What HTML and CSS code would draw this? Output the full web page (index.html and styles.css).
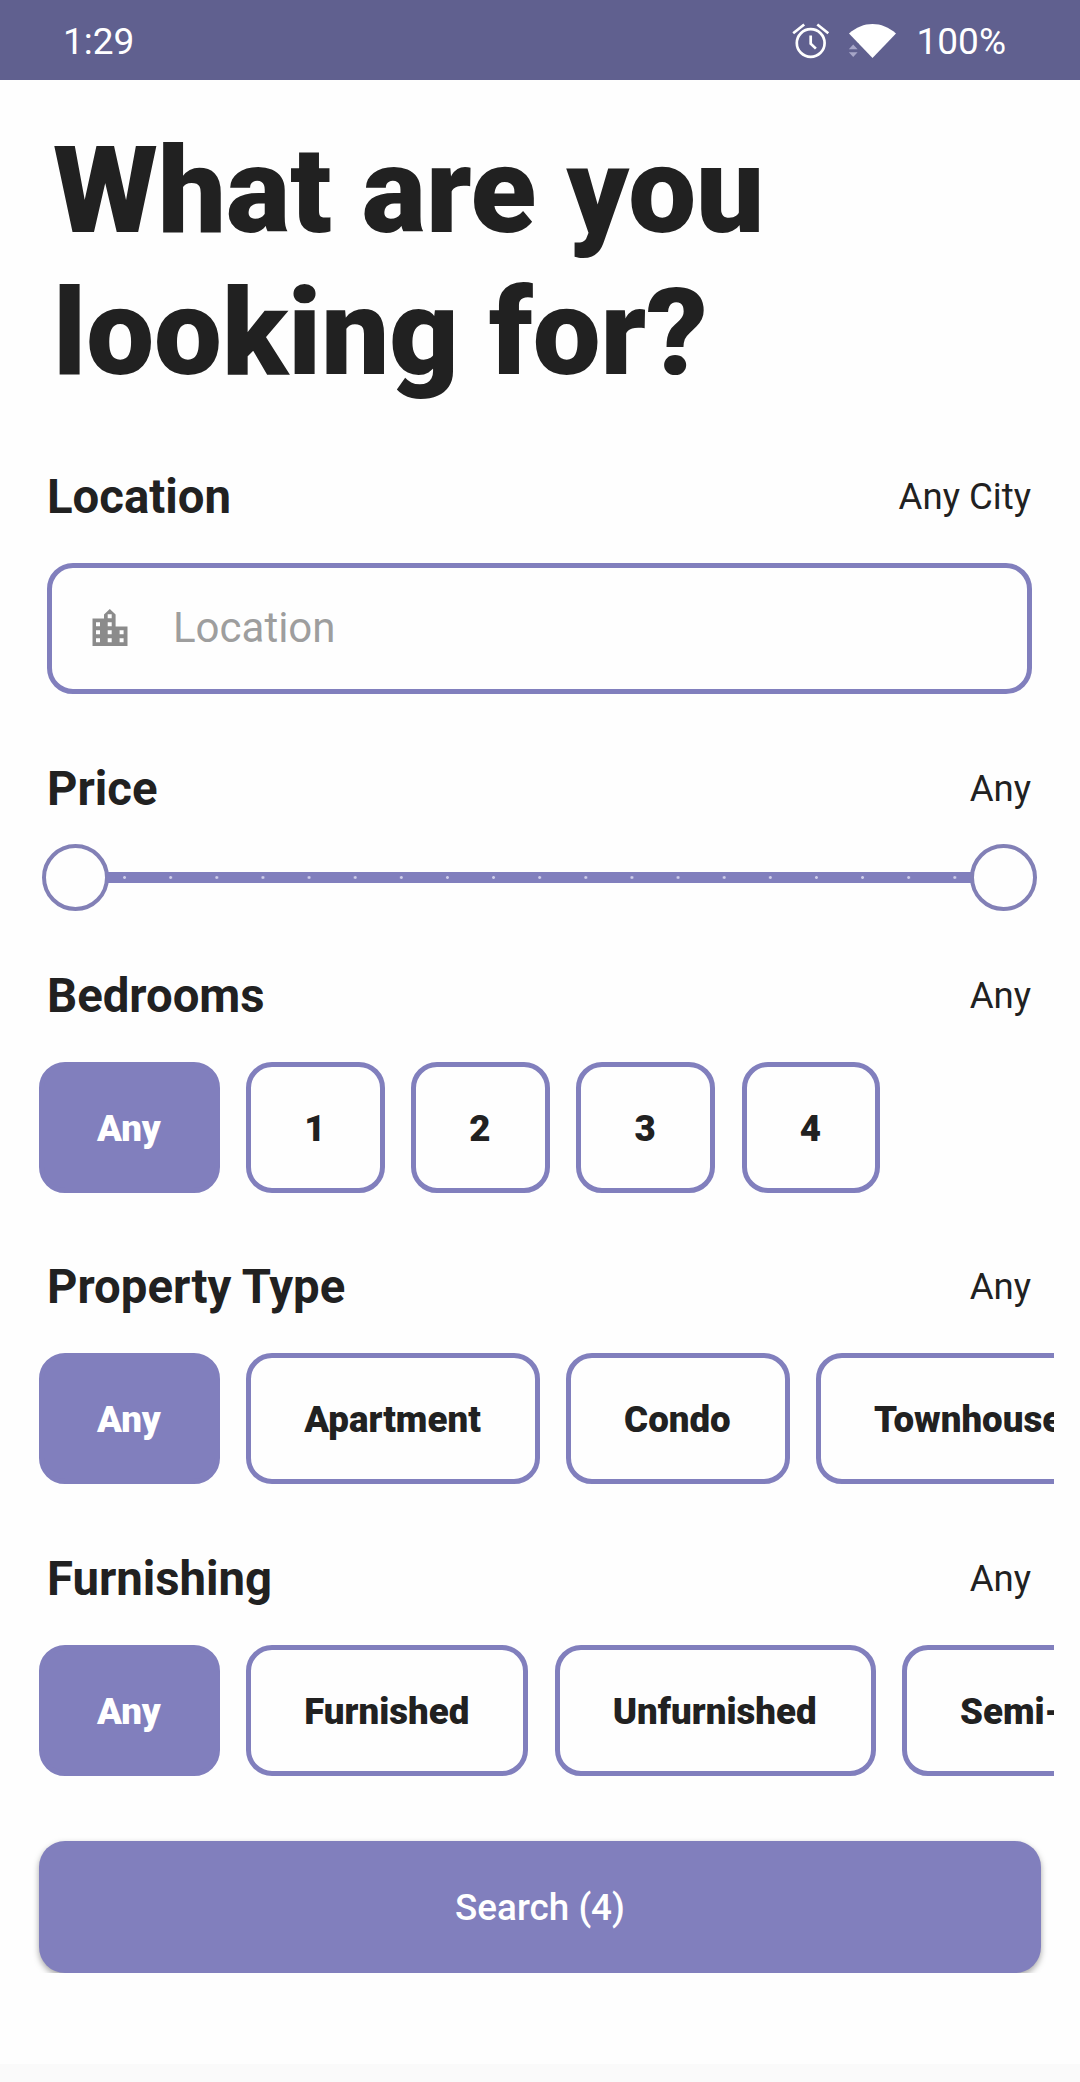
FILE: index.html
```html
<!DOCTYPE html>
<html lang="en">
<head>
<meta charset="utf-8">
<title>Property search</title>
<link rel="stylesheet" href="styles.css">
</head>
<body>
<header class="status">
  <span class="clock">1:29</span>
  <div class="status-right">
    <svg class="alarm" width="38" height="36" viewBox="0 0 38 36" fill="none" stroke="#fff" stroke-width="2.7">
      <circle cx="18.7" cy="20" r="13.9"/>
      <path d="M18.7 12.4v8.2l5.2 5M1.2 10.3 12.2 1.5M25.3 1.5l11 8.8"/>
    </svg>
    <svg class="wifi" width="48" height="36" viewBox="0 0 48 36">
      <path fill="#fff" d="M1 10.5C15-2.3 34-2.3 48 10.5L24.5 35z"/>
      <path fill="#60608f" d="M0 20.500h10.500v15H0z"/>
      <path fill="#a7a6c8" d="M.8 26.200 5.200 21.400l4.400 4.800zM.8 29.200h8.800L5.200 34z"/>
    </svg>
    <span class="battery">100%</span>
  </div>
</header>
<main class="page">
  <h1 class="title">What are you<br>looking for?</h1>

  <section class="group location">
    <div class="head"><h2>Location</h2><span>Any City</span></div>
    <div class="field">
      <svg width="36" height="38" viewBox="0 0 36 38" fill="#8b8b8b" fill-rule="evenodd">
        <path d="M12 9.5V5.5L17.8 0l5.8 5.5v12H35.500V37H.5V9.500zM4 13.200v4h4v-4zM4 21.200v4h4v-4zM4 29.200v4h4v-4zM15.700 5.300v4h4v-4zM15.700 13.200v4h4v-4zM15.700 21.200v4h4v-4zM15.700 29.200v4h4v-4zM27.600 21.200v4h4v-4zM27.600 29.200v4h4v-4z"/>
      </svg>
      <span>Location</span>
    </div>
  </section>

  <section class="group price">
    <div class="head"><h2>Price</h2><span>Any</span></div>
    <div class="slider"><i class="thumb"></i><i class="track"></i><i class="thumb"></i></div>
  </section>

  <section class="group bedrooms">
    <div class="head"><h2>Bedrooms</h2><span>Any</span></div>
    <div class="chips">
      <div class="chip on">Any</div><div class="chip">1</div><div class="chip">2</div><div class="chip">3</div><div class="chip">4</div>
    </div>
  </section>

  <section class="group type">
    <div class="head"><h2>Property Type</h2><span>Any</span></div>
    <div class="chips">
      <div class="chip on">Any</div><div class="chip">Apartment</div><div class="chip">Condo</div><div class="chip">Townhouse</div>
    </div>
  </section>

  <section class="group furnishing">
    <div class="head"><h2>Furnishing</h2><span>Any</span></div>
    <div class="chips">
      <div class="chip on">Any</div><div class="chip">Furnished</div><div class="chip">Unfurnished</div><div class="chip">Semi-Furnished</div>
    </div>
  </section>

  <div class="action"><div class="search">Search (4)</div></div>
</main>
<footer class="bottom"></footer>
</body>
</html>
```
FILE: styles.css
```css
* { box-sizing: border-box; }
body {
  margin: 0;
  height: 2082px;
  display: flex;
  flex-direction: column;
  overflow: hidden;
  background: #fefefe;
  color: #212121;
  font-family: Roboto, sans-serif;
}
.status {
  height: 80px;
  flex: none;
  display: flex;
  align-items: center;
  justify-content: space-between;
  padding: 2px 74px 0 63px;
  background: #60608f;
  color: #fff;
  font-size: 37px;
}
.status-right { display: flex; align-items: center; }
.alarm { margin-right: 18px; }
.wifi { margin-right: 21px; }
.page { flex: 1; padding-top: 40px; }
.title {
  margin: 0 0 0 53px;
  height: 284px;
  font-size: 120.750px;
  line-height: 142px;
  font-weight: 900;
}
.head {
  height: 56px;
  display: flex;
  align-items: center;
  justify-content: space-between;
  padding: 0 49px 0 47px;
}
.head h2 { margin: 0; font-size: 47.300px; line-height: 56px; font-weight: 700; }
.head span { padding-bottom: 2px; font-size: 36.600px; }
.location { margin-top: 65px; }
.field {
  margin: 38px 48px 0 47px;
  height: 131px;
  display: flex;
  align-items: center;
  gap: 45px;
  padding: 0 0 2px 40px;
  border: 5px solid #817fbd;
  border-radius: 26px;
  color: #9e9e9e;
  font-size: 42px;
}
.price { margin-top: 67px; }
.slider {
  margin: 27px 43px 0 42px;
  height: 67px;
  display: flex;
  align-items: center;
}
.thumb {
  flex: none;
  width: 67px;
  height: 67px;
  border: 4px solid #8280b6;
  border-radius: 50%;
}
.track {
  flex: 1;
  height: 11px;
  margin: 0 -2px;
  background: radial-gradient(circle, #cfceea 1px, transparent 1.8px) -5.500px 0 / 46.130px 11px #817fbd;
}
.bedrooms { margin-top: 57px; }
.chips {
  width: 1054px;
  margin-top: 38px;
  padding-left: 39px;
  display: flex;
  gap: 26.300px;
  overflow: hidden;
}
.chip {
  flex: none;
  height: 131px;
  display: flex;
  align-items: center;
  padding: 2px 54px 0 53px;
  border: 5px solid #817fbd;
  border-radius: 26px;
  font-size: 36.700px;
  font-weight: 900;
}
.bedrooms .chip:not(.on) { padding-right: 54.600px; }
.chip.on { background: #817fbd; color: #fff; }
.type { margin-top: 66px; }
.furnishing { margin-top: 67px; }
.action {
  margin-top: 60px;
  padding: 5px 39px 0;
  overflow: hidden;
}
.search {
  height: 132px;
  display: flex;
  align-items: center;
  justify-content: center;
  border-radius: 26px;
  background: #817fbd;
  box-shadow: 0 3px 6px rgba(0, 0, 0, .35);
  color: #fff;
  font-size: 36.800px;
  font-weight: 500;
}
.bottom { height: 18px; flex: none; background: #fafafa; }
```
